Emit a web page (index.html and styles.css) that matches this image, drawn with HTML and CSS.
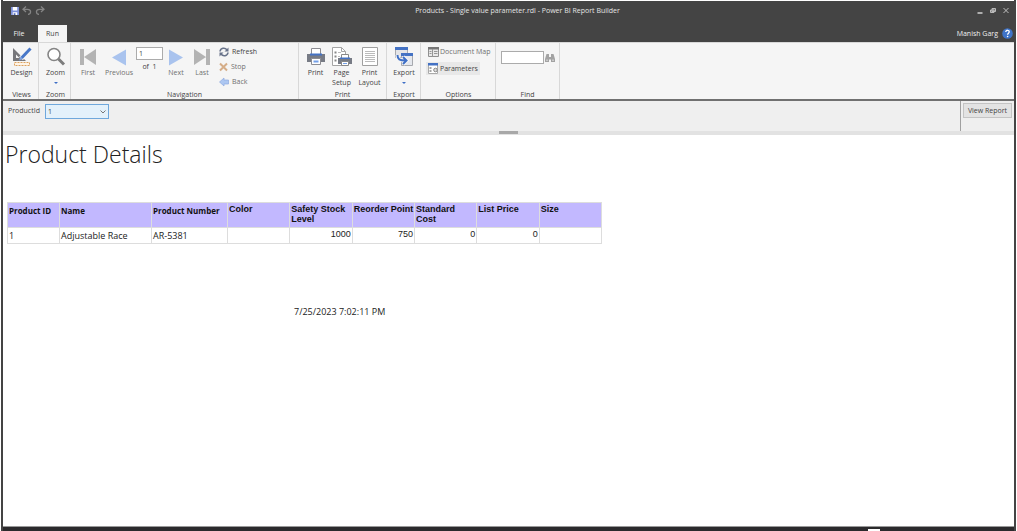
FILE: index.html
```
<!DOCTYPE html>
<html lang="en">
<head>
    <meta charset="UTF-8">
    <title>Products - Single value parameter.rdl - Power BI Report Builder</title>
    <link rel="stylesheet" href="styles.css">
</head>
<body>
    <div class="window">
        <!-- Title bar -->
        <header class="title-bar">
            <div class="quick-access">
                <button class="bare-button" aria-label="Save">
                    <svg width="8" height="8" viewBox="0 0 9 9"><path d="M0 0h9v9H0z" fill="#7d90da"/><path d="M2 0h5v4H2zM2 6h5v3H2z" fill="#fff"/><path d="M3 7h2v2H3z" fill="#5368b5"/></svg>
                </button>
                <button class="bare-button" aria-label="Undo">
                    <svg width="10" height="9" viewBox="0 0 10 9" fill="none" stroke="#858585" stroke-width="1.300"><path d="M4 .5L1 3.300l3 2.800M1 3.300h4.500c4 0 4 4.700.5 5.200"/></svg>
                </button>
                <button class="bare-button" aria-label="Redo">
                    <svg width="10" height="9" viewBox="0 0 10 9" fill="none" stroke="#858585" stroke-width="1.300"><path d="M6 .5l3 2.800-3 2.800M9 3.300H4.500c-4 0-4 4.700-.5 5.200"/></svg>
                </button>
            </div>
            <h1 class="window-title">Products - Single value parameter.rdl - Power BI Report Builder</h1>
            <div class="window-controls">
                <button class="bare-button" aria-label="Minimize">
                    <svg width="6" height="7" viewBox="0 0 6 7"><path d="M.5 6h5" stroke="#ddd" stroke-width="1.400"/></svg>
                </button>
                <button class="bare-button" aria-label="Restore">
                    <svg width="6" height="7" viewBox="0 0 6 7" fill="#777" stroke="#bbb"><path d="M2 1.500h3.500v3H2zM.5 3h3.500v2.500H.5z"/></svg>
                </button>
                <button class="bare-button" aria-label="Close">
                    <svg width="6" height="7" viewBox="0 0 6 7"><path d="M.5 1l5 5M5.500 1l-5 5" stroke="#ccc" stroke-width=".9"/></svg>
                </button>
            </div>
        </header>

        <nav class="tabs">
            <button class="tab">File</button>
            <button class="tab active">Run</button>
            <span class="user-name">Manish Garg</span>
            <button class="bare-button" aria-label="Help">
                <svg width="11" height="11" viewBox="0 0 11 11"><circle cx="5.500" cy="5.500" r="5.300" fill="#3f74c8"/><path d="M3.800 4c0-2.400 3.600-2.200 3.400 0-.1 1.200-1.600 1.200-1.600 2.700" fill="none" stroke="#fff" stroke-width="1.300"/><circle cx="5.600" cy="8.500" r=".8" fill="#fff"/></svg>
            </button>
        </nav>

        <!-- Ribbon -->
        <div class="ribbon">
            <section class="group views">
                <div class="group-body">
                    <button class="big-button">
                        <svg width="20" height="20" viewBox="0 0 20 20"><path d="M1 1v13h13z" fill="#77777b"/><path d="M4 7.500V11h3.500z" fill="#f5f5f5"/><path d="M18.500 1.500L9 11.500" stroke="#f5f5f5" stroke-width="5"/><path d="M18.500 1.500L9.500 11" stroke="#4777c8" stroke-width="3"/><path d="M8.500 9.500l2.500 2.500-4 1.500z" fill="#7da1df"/><path d="M2.500 15.500h15v3h-15z" fill="#fff4e6" stroke="#dda15e" stroke-dasharray="2 1"/></svg>
                        Design
                    </button>
                </div>
                <h2>Views</h2>
            </section>
            <section class="group zoom">
                <div class="group-body">
                    <button class="big-button">
                        <svg width="20" height="20" viewBox="0 0 20 20"><circle cx="8" cy="7.500" r="6" fill="#fff" stroke="#858585" stroke-width="1.600"/><path d="M12.500 12l5.500 5.500" stroke="#7d7d7d" stroke-width="3"/></svg>
                        Zoom
                        <span class="caret"></span>
                    </button>
                </div>
                <h2>Zoom</h2>
            </section>
            <section class="group navigation">
                <div class="group-body">
                    <button class="big-button dim first">
                        <svg width="20" height="20" viewBox="0 0 20 20" fill="#b3b3b3"><path d="M2 2h4v16H2zM18 2v16L6 10z"/></svg>
                        First
                    </button>
                    <button class="big-button dim previous">
                        <svg width="20" height="20" viewBox="0 0 20 20"><path d="M17 2.500v16L3 10.500z" fill="#a9c3ee"/></svg>
                        Previous
                    </button>
                    <div class="page-box">
                        <input type="text" class="page-input" value="1" aria-label="Page number">
                        <span>of&nbsp; 1</span>
                    </div>
                    <button class="big-button dim">
                        <svg width="20" height="20" viewBox="0 0 20 20"><path d="M3 2.500v16l14-8z" fill="#a9c3ee"/></svg>
                        Next
                    </button>
                    <button class="big-button dim">
                        <svg width="20" height="20" viewBox="0 0 20 20" fill="#b3b3b3"><path d="M14 2h4v16h-4zM2 2v16l12-8z"/></svg>
                        Last
                    </button>
                    <div class="small-buttons">
                        <button class="small-button">
                            <svg width="10" height="10" viewBox="0 0 10 10" fill="none" stroke="#68738a" stroke-width="1.600"><path d="M1 4.500C1.500.8 6 .2 8 3M9 5.500C8.500 9.200 4 9.800 2 7"/><path d="M9.500 .5v4h-4zM.5 9.500v-4h4z" fill="#68738a" stroke="none"/></svg>
                            Refresh
                        </button>
                        <button class="small-button dim">
                            <svg width="9" height="10" viewBox="0 0 9 10"><path d="M1 1.500l7 7M8 1.500l-7 7" stroke="#d5ad88" stroke-width="2"/></svg>
                            Stop
                        </button>
                        <button class="small-button dim">
                            <svg width="10" height="10" viewBox="0 0 10 10"><path d="M.5 5L5 1v2h4.500v4H5v2z" fill="#adc7f1" stroke="#8eabe0" stroke-width=".7"/></svg>
                            Back
                        </button>
                    </div>
                </div>
                <h2>Navigation</h2>
            </section>
            <section class="group print">
                <div class="group-body">
                    <button class="big-button">
                        <svg width="20" height="20" viewBox="0 0 20 20"><path d="M5.500 1.500h9v6h-9z" fill="#fff" stroke="#8c8c92"/><path d="M1 7h18v8H1z" fill="#777b85"/><path d="M4 6.500h12v2H4z" fill="#4472c4"/><path d="M5.500 11.500h9v6h-9z" fill="#fff" stroke="#8c8c92"/><path d="M7.500 13.500h5v2h-5z" fill="#75a1e8"/></svg>
                        Print
                    </button>
                    <button class="big-button page-setup">
                        <svg width="20" height="20" viewBox="0 0 20 20"><path d="M.5 .5h9l4 4v14H.5z" fill="#fff" stroke="#a5a5a5"/><path d="M9.500 .5v4h4" fill="none" stroke="#a5a5a5"/><path d="M2.500 5.500h2M2.500 9.500h2M2.500 13.500h2" stroke="#888" stroke-width="2"/><path d="M6 5.500h3M6 9.500h2" stroke="#bbb"/><path d="M9.500 7.500h7v4h-7z" fill="#fff" stroke="#888"/><path d="M6 11h14v6H6z" fill="#777b85"/><path d="M8 10.500h10v1.500H8z" fill="#4472c4"/><path d="M9.500 14.500h7v4h-7z" fill="#fff" stroke="#888"/><path d="M11 16h4v1h-4z" fill="#75a1e8"/></svg>
                        Page Setup
                    </button>
                    <button class="big-button print-layout">
                        <svg width="20" height="20" viewBox="0 0 20 20"><path d="M2.500 .5h15v18h-15z" fill="#fff" stroke="#a0a0a0"/><path d="M5 4.500h10M5 6.500h10M5 8.500h10M5 10.500h10M5 12.500h10M5 14.500h10" stroke="#bbb"/></svg>
                        Print Layout
                    </button>
                </div>
                <h2>Print</h2>
            </section>
            <section class="group export">
                <div class="group-body">
                    <button class="big-button">
                        <svg width="20" height="20" viewBox="0 0 20 20"><path d="M1.500 1.500h12v9h-12z" fill="#e4e5e8" stroke="#a7a9ae"/><path d="M1 0h13v3H1z" fill="#4472c4"/><path d="M7.500 7.500h11v11h-11z" fill="#e4e7ed" stroke="#a7a9ae"/><path d="M7 6h12v3H7z" fill="#4472c4"/><path d="M3.500 8c0 4.500 2 5.500 8 5.500M9 10l3.500 3.500L9 17" fill="none" stroke="#f5f5f5" stroke-width="4"/><path d="M3.500 8c0 4.500 2 5.500 8 5.500M9 10l3.500 3.500L9 17" fill="none" stroke="#3e6fc6" stroke-width="2"/></svg>
                        Export
                        <span class="caret"></span>
                    </button>
                </div>
                <h2>Export</h2>
            </section>
            <section class="group options">
                <div class="group-body">
                    <button class="option-button dim">
                        <svg width="11" height="10" viewBox="0 0 11 10"><path d="M.5 .5h10v9H.5z" fill="#e9e9e9" stroke="#909090"/><path d="M0 0h11v2.500H0z" fill="#777"/><path d="M4.500 2v8M1.500 4.500h2M1.500 6.500h2M6 4.500h3.500M6 6.500h3.500" stroke="#969696"/></svg>
                        Document Map
                    </button>
                    <button class="option-button pressed">
                        <svg width="11" height="11" viewBox="0 0 11 11"><path d="M.5 .5h9v10h-9z" fill="#fff" stroke="#aaa"/><path d="M0 0h10v2.500H0z" fill="#4472c4"/><path d="M1.500 5h2M1.500 8h2" stroke="#888" stroke-width="1.500"/><circle cx="7.500" cy="7" r="1.800" fill="#ddd" stroke="#888"/></svg>
                        Parameters
                    </button>
                </div>
                <h2>Options</h2>
            </section>
            <section class="group find">
                <div class="group-body">
                    <input type="text" class="find-input" aria-label="Find text">
                    <button class="bare-button" aria-label="Find">
                        <svg width="10" height="10" viewBox="0 0 10 10" fill="#a3a3a3"><path d="M1.500 1H4v3h2V1h2.500L10 6v3H6V6.500H4V9H0V6z"/><path d="M1.500 6.500h1V8h-1zM7.500 6.500h1V8h-1z" fill="#eee"/></svg>
                    </button>
                </div>
                <h2>Find</h2>
            </section>
        </div>

        <!-- Parameters -->
        <form class="parameters">
            <label for="productId">ProductId</label>
            <div class="select-wrap">
                <select id="productId">
                    <option>1</option>
                </select>
                <svg class="chevron" width="6" height="4" viewBox="0 0 6 4"><path d="M.5 .5L3 3 5.500 .5" fill="none" stroke="#777"/></svg>
            </div>
            <div class="view-area">
                <button type="button" class="view-report">View Report</button>
            </div>
        </form>
        <div class="splitter"><span class="grip"></span></div>

        <!-- Report -->
        <main class="report">
            <h2 class="report-title">Product Details</h2>
            <table>
                <colgroup>
                    <col class="col-id">
                    <col class="col-name">
                    <col class="col-number">
                    <col span="6" class="col-plain">
                </colgroup>
                <thead>
                    <tr>
                        <th class="segoe">Product ID</th>
                        <th class="segoe">Name</th>
                        <th class="segoe">Product Number</th>
                        <th>Color</th>
                        <th>Safety Stock Level</th>
                        <th>Reorder Point</th>
                        <th>Standard Cost</th>
                        <th>List Price</th>
                        <th>Size</th>
                    </tr>
                </thead>
                <tbody>
                    <tr>
                        <td class="segoe">1</td>
                        <td class="segoe">Adjustable Race</td>
                        <td class="segoe">AR-5381</td>
                        <td></td>
                        <td class="number">1000</td>
                        <td class="number">750</td>
                        <td class="number">0</td>
                        <td class="number">0</td>
                        <td></td>
                    </tr>
                </tbody>
            </table>
            <p class="run-time">7/25/2023 7:02:11 PM</p>
        </main>
        <footer class="status-bar"><span class="status-thumb"></span></footer>
    </div>
</body>
</html>
```
FILE: styles.css
```
:root {
    --chrome: #444444;
    --ribbon: #f5f5f5;
    --line: #d8d8d8;
    --text: #444444;
    --ui-font: "Open Sans", "Noto Sans", sans-serif;
}

* {
    box-sizing: border-box;
}

body {
    margin: 0;
    background-color: white;
    color: var(--text);
    font-family: var(--ui-font);
    font-size: 7px;
    line-height: 10px;
}

button, input, select {
    font: inherit;
    color: inherit;
    margin: 0;
    padding: 0;
}

button {
    border: none;
    background: none;
}

svg {
    display: block;
    flex: none;
}

h1, h2, p {
    margin: 0;
    font-size: inherit;
    font-weight: normal;
}

.window {
    display: flex;
    flex-direction: column;
    min-height: 100vh;
    border: solid var(--chrome);
    border-width: 0 2px;
    margin: 0 1px;
}

/* Title bar */
.title-bar {
    display: grid;
    grid-template-columns: 1fr auto 1fr;
    align-items: center;
    height: 25px;
    padding: 0 5px 5px 8px;
    border-top: 1px solid white;
    background-color: var(--chrome);
    color: #e4e4e4;
}

.quick-access {
    display: flex;
    gap: 3px;
}

.window-title {
    padding-left: 15px;
}

.window-controls {
    display: flex;
    justify-content: flex-end;
    gap: 7px;
}

.tabs {
    display: flex;
    align-items: center;
    height: 17px;
    padding-right: 1px;
    background-color: var(--chrome);
    color: #f0f0f0;
}

.tab {
    width: 32px;
    height: 17px;
}

.tab.active {
    width: 29px;
    margin-left: 3px;
    background-color: var(--ribbon);
    color: var(--text);
}

.user-name {
    margin-left: auto;
    margin-right: 4px;
}

/* Ribbon */
.ribbon {
    display: flex;
    height: 59px;
    background-color: var(--ribbon);
    border-top: 1px solid var(--line);
    border-bottom: 2px solid #707070;
}

.group {
    display: flex;
    flex-direction: column;
    border-right: 1px solid var(--line);
}

.group h2 {
    line-height: 8px;
    text-align: center;
}

.group-body {
    display: flex;
    justify-content: center;
    height: 48px;
    padding-top: 4px;
}

.big-button {
    display: flex;
    flex-direction: column;
    align-items: center;
    justify-content: flex-start;
    width: 26px;
}

.big-button svg {
    margin-bottom: 1px;
}

.dim {
    color: #707070;
}

.caret {
    border: 2px solid transparent;
    border-top-color: #3e6fc6;
    margin-top: 4px;
}

.views {
    width: 36px;
    padding-left: 2px;
}

.zoom {
    width: 32px;
    padding-left: 2px;
}

.navigation {
    width: 228px;
}

.navigation .group-body {
    justify-content: flex-start;
    padding-left: 3px;
}

.first {
    width: 28px;
}

.previous {
    width: 34px;
}

.page-box {
    display: flex;
    flex-direction: column;
    gap: 2px;
    width: 27px;
    text-align: center;
}

.page-input, .find-input {
    height: 13px;
    border: 1px solid #ababab;
    background-color: white;
    padding: 0 2px;
}

.page-input {
    width: 27px;
}

.small-buttons {
    display: flex;
    flex-direction: column;
    gap: 5px;
    margin-left: 4px;
}

.small-button {
    display: flex;
    align-items: center;
    gap: 3px;
}

.print {
    width: 88px;
}

.print .group-body {
    padding-left: 2px;
}

.page-setup {
    width: 26px;
}

.print-layout {
    width: 30px;
}

.export {
    width: 34px;
    padding-left: 1px;
}

.options {
    width: 75px;
    padding-left: 1px;
}

.options .group-body {
    flex-direction: column;
    justify-content: flex-start;
    align-items: flex-start;
    gap: 4px;
    padding: 2px 0 0 4px;
}

.option-button {
    display: flex;
    align-items: center;
    gap: 1px;
    height: 13px;
    padding: 0 2px;
    white-space: nowrap;
}

.option-button.pressed {
    background-color: #e8e8e8;
}

.find {
    width: 64px;
}

.find .group-body {
    align-items: flex-start;
    gap: 1px;
    padding-top: 8px;
}

.find .bare-button {
    padding-top: 2px;
}

.find-input {
    width: 43px;
}

/* Parameters */
.parameters {
    display: flex;
    height: 30px;
    padding-left: 5px;
    background-color: #efefef;
}

.parameters label {
    width: 37px;
    padding-top: 5px;
}

.select-wrap {
    position: relative;
    height: 15px;
    margin-top: 3px;
}

.select-wrap select {
    appearance: none;
    width: 64px;
    height: 15px;
    padding: 0 2px;
    border: 1px solid #6fa8dc;
    border-radius: 0;
    background-color: #e3f1fb;
}

.chevron {
    position: absolute;
    top: 6px;
    right: 3px;
    pointer-events: none;
}

.view-area {
    margin-left: auto;
    padding: 2px;
    border-left: 1px solid #a0a0a0;
}

.view-report {
    width: 49px;
    height: 15px;
    border: 1px solid #c4c4c4;
    background-color: #e3e3e3;
    white-space: nowrap;
}

.splitter {
    display: flex;
    justify-content: center;
    height: 4px;
    background-color: #e2e2e2;
}

.grip {
    width: 19px;
    height: 3px;
    background-color: #a8a8a8;
}

/* Report */
.report {
    flex: 1;
    padding: 3px 2px;
    background-color: white;
    color: #222222;
}

.report-title {
    font-size: 23px;
    line-height: 32px;
    font-weight: 300;
}

table {
    margin: 32px 0 0 2px;
    border-collapse: collapse;
    table-layout: fixed;
    width: 595px;
    font-family: "Liberation Sans", Arial, sans-serif;
    font-size: 9px;
}

.col-id {
    width: 52px;
}

.col-name {
    width: 92px;
}

.col-number {
    width: 76px;
}

th, td {
    padding: 1px;
    border: 1px solid #dddddd;
    text-align: left;
    vertical-align: top;
}

th {
    height: 25px;
    padding-right: 0;
    background-color: #c2b8ff;
    color: #111111;
}

td {
    height: 16px;
}

.segoe {
    font-family: var(--ui-font);
    line-height: 13px;
    white-space: nowrap;
}

th.segoe {
    font-size: 8px;
}

.number {
    text-align: right;
}

.run-time {
    margin: 63px 0 0 289px;
    font-size: 9px;
}

.status-bar {
    display: flex;
    justify-content: flex-end;
    height: 5px;
    padding: 2px 134px 0 0;
    border-top: 1px solid #999999;
    background-color: #2b2a2c;
}

.status-thumb {
    width: 12px;
    background-color: white;
}
```
